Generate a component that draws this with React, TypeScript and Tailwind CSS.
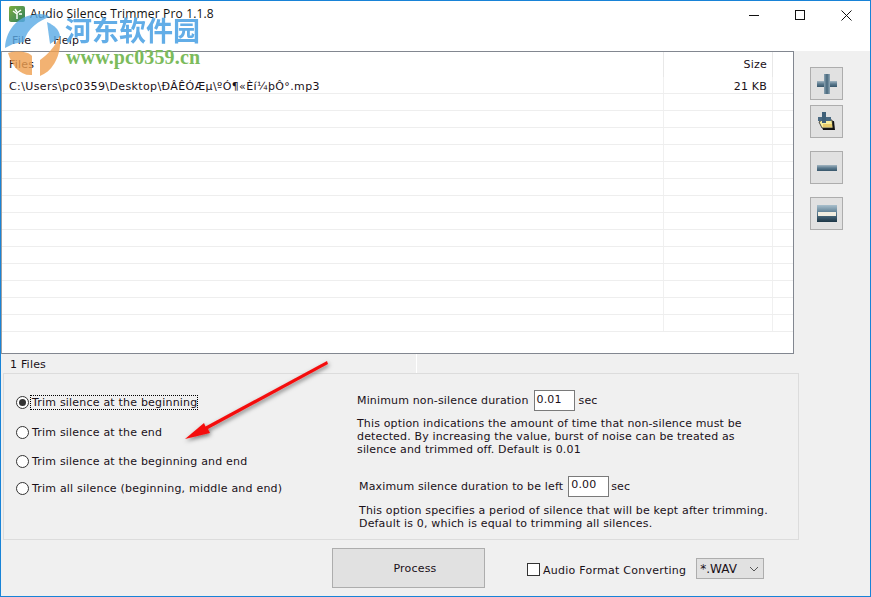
import React from "react";

const font = { fontFamily: '"DejaVu Sans", sans-serif' };

function PlusIcon() {
  return (
    <svg width="20" height="20" viewBox="0 0 20 20">
      <defs>
        <linearGradient id="pv" x1="0" y1="0" x2="1" y2="0">
          <stop offset="0" stopColor="#8ba3b2" />
          <stop offset="0.5" stopColor="#47677c" />
          <stop offset="1" stopColor="#93aab8" />
        </linearGradient>
        <linearGradient id="ph" x1="0" y1="0" x2="0" y2="1">
          <stop offset="0" stopColor="#a3b6c2" />
          <stop offset="0.5" stopColor="#5b7a8e" />
          <stop offset="1" stopColor="#37566b" />
        </linearGradient>
      </defs>
      <rect x="0" y="7" width="20" height="6" fill="url(#ph)" />
      <rect x="7" y="0" width="6" height="20" fill="url(#pv)" />
    </svg>
  );
}

function AddFolderIcon() {
  return (
    <svg width="20" height="20" viewBox="0 0 20 20">
      <path d="M4 10 L17 9 L18 18 L6 18 Z" fill="#111" />
      <path d="M2 10 L5 8 L15 8 L16 16 L5 16 Z" fill="#f7ef9e" stroke="#222" strokeWidth="0.8" />
      <rect x="6" y="12" width="9" height="3" fill="#e8cc6a" />
      <rect x="1" y="5" width="13" height="4" fill="#4a6a82" />
      <rect x="5" y="0" width="4" height="11" fill="#3f6078" />
    </svg>
  );
}

function MinusIcon() {
  return (
    <svg width="20" height="6" viewBox="0 0 20 6">
      <defs>
        <linearGradient id="mh" x1="0" y1="0" x2="0" y2="1">
          <stop offset="0" stopColor="#a3b6c2" />
          <stop offset="0.5" stopColor="#5b7a8e" />
          <stop offset="1" stopColor="#37566b" />
        </linearGradient>
      </defs>
      <rect width="20" height="6" fill="url(#mh)" />
    </svg>
  );
}

function ClearIcon() {
  return (
    <svg width="20" height="17" viewBox="0 0 20 17">
      <defs>
        <linearGradient id="cl" x1="0" y1="0" x2="0" y2="1">
          <stop offset="0" stopColor="#a9c0cd" />
          <stop offset="0.45" stopColor="#5c7d92" />
          <stop offset="1" stopColor="#1c3646" />
        </linearGradient>
      </defs>
      <rect width="20" height="17" fill="url(#cl)" />
      <rect x="1" y="7" width="18" height="4" fill="#f1ede0" />
    </svg>
  );
}

function ToolButton({ children, className = "" }: { children: React.ReactNode; className?: string }) {
  return (
    <div className={`w-[33px] h-[33px] bg-[#e1e1e1] border border-[#adadad] flex items-center justify-center ${className}`}>
      {children}
    </div>
  );
}

function Radio({ checked, label, focus, className = "" }: { checked?: boolean; label: string; focus?: boolean; className?: string }) {
  return (
    <div className={`flex items-center h-[13px] ${className}`}>
      <span className="w-[13px] h-[13px] rounded-full border border-[#333] bg-white flex items-center justify-center shrink-0">
        {checked && <span className="w-[7px] h-[7px] rounded-full bg-[#333]" />}
      </span>
      <span className={`ml-[2px] pl-[1px] leading-[13px] tracking-[0.2px] ${focus ? "outline-1 outline-dotted outline-black" : ""}`}>{label}</span>
    </div>
  );
}

const rows = Array.from({ length: 15 });

export default function App() {
  return (
    <div className="relative w-[871px] h-[597px] overflow-hidden bg-[#f0f0f0] border-x border-[#1883d7] border-y text-[11px] text-[#1a1018]" style={font}>
      {/* title + menu */}
      <div className="h-[50px] bg-white flex flex-col">
        <div className="h-[25px] flex items-center">
          <div className="ml-[8px] w-[16px] h-[16px] bg-gradient-to-br from-[#7cae3a] to-[#2c7f5c] rounded-[2px] flex items-center justify-center">
            <svg width="12" height="12" viewBox="0 0 12 12"><path d="M6 11 V5 M6 6 L2 3 M6 5 L10 2 M8 6 L11 6 M4 1 L6 4" stroke="#fff" strokeWidth="1.4" fill="none" /></svg>
          </div>
          <span className="ml-[5px] text-[12px] tracking-[0.16px] text-[#111] font-['Open_Sans',sans-serif]">Audio Silence Trimmer Pro 1.1.8</span>
          <div className="ml-auto flex items-center text-black pt-[3px]">
            <svg width="46" height="14" viewBox="0 0 46 14"><line x1="17" x2="27" y1="7.5" y2="7.5" stroke="#111" /></svg>
            <svg width="46" height="14" viewBox="0 0 46 14"><rect x="17.5" y="2.5" width="9" height="9" fill="none" stroke="#111" /></svg>
            <svg width="46" height="14" viewBox="0 0 46 14"><path d="M17.5 2.5 L27.5 12.5 M27.5 2.5 L17.5 12.5" stroke="#111" /></svg>
          </div>
        </div>
        <div className="flex h-[25px] items-center gap-[22px] pl-[11px] pt-[5px] text-[11px] tracking-[0.2px]">
          <span>File</span>
          <span>Help</span>
        </div>
      </div>

      {/* table + toolbar */}
      <div className="flex h-[303px]">
        <div className="w-[793px] h-full border-t border-r border-b border-[#828790] border-l border-l-[#a0a0a0] bg-white overflow-hidden">
          <div className="flex h-[25px] items-center">
            <div className="w-[661px] pl-[7px] pt-[2px] tracking-[0.2px]">Files</div>
            <div className="w-[110px] h-full border-x border-[#e8e8e8] flex items-center justify-end pr-[5px] pt-[2px] tracking-[0.2px]">Size</div>
          </div>
          {rows.map((_, i) => (
            <div key={i} className="flex h-[17px] border-b border-[#eeeeee]">
              <div className="w-[661px] pl-[7px] leading-[20px] whitespace-nowrap tracking-[0.38px]">
                {i === 0 ? "C:\\Users\\pc0359\\Desktop\\ÐÂÊÓÆµ\\ºÓ¶«Èí¼þÔ°.mp3" : ""}
              </div>
              <div className="w-[110px] border-x border-[#f0f0f0] text-right pr-[5px] leading-[20px] tracking-[0.2px]">{i === 0 ? "21 KB" : ""}</div>
            </div>
          ))}
        </div>
        <div className="ml-[16px] flex flex-col pt-[16px]">
          <ToolButton><PlusIcon /></ToolButton>
          <ToolButton className="mt-[5px]"><AddFolderIcon /></ToolButton>
          <ToolButton className="mt-[13px]"><MinusIcon /></ToolButton>
          <ToolButton className="mt-[13px]"><ClearIcon /></ToolButton>
        </div>
      </div>

      {/* status */}
      <div className="h-[19px] flex items-center pl-[9px]">
        <span className="w-[406px] pt-[4px] tracking-[0.2px]">1 Files</span>
        <span className="w-px h-full bg-white" />
      </div>

      {/* options */}
      <div className="ml-[2px] w-[796px] h-[167px] border border-[#dcdcdc] flex">
        <div className="w-[353px] pl-[12px] pt-[22px] flex flex-col">
          <Radio checked focus label="Trim silence at the beginning" />
          <Radio label="Trim silence at the end" className="mt-[17px]" />
          <Radio label="Trim silence at the beginning and end" className="mt-[16px]" />
          <Radio label="Trim all silence (beginning, middle and end)" className="mt-[14px]" />
        </div>
        <div className="flex-1 pt-[16px] tracking-[0.15px]">
          <div className="flex items-center h-[21px]">
            <span className="pt-[1px]">Minimum non-silence duration</span>
            <span className="ml-[5px] w-[41px] h-[21px] bg-white border border-[#7a7a7a] pl-[2px] leading-[18px]">0.01</span>
            <span className="ml-[4px] pt-[1px]">sec</span>
          </div>
          <div className="mt-[6px] leading-[13px] whitespace-nowrap">
            This option indications the amount of time that non-silence must be<br />
            detected. By increasing the value, burst of noise can be treated as<br />
            silence and trimmed off. Default is 0.01
          </div>
          <div className="ml-[2px] mt-[20px] flex items-center h-[21px]">
            <span className="pt-[2px]">Maximum silence duration to be left</span>
            <span className="ml-[5px] w-[41px] h-[21px] bg-white border border-[#7a7a7a] pl-[2px] leading-[16px]">0.00</span>
            <span className="ml-[2px] pt-[2px]">sec</span>
          </div>
          <div className="ml-[2px] mt-[7px] leading-[13px] whitespace-nowrap tracking-[0.17px]">
            This option specifies a period of silence that will be kept after trimming.<br />
            Default is 0, which is equal to trimming all silences.
          </div>
        </div>
      </div>

      {/* footer */}
      <div className="flex items-start pl-[331px] pt-[8px]">
        <div className="w-[153px] h-[40px] bg-[#e1e1e1] border border-[#adadad] flex items-center justify-center pl-[13px] pt-[3px] tracking-[0.2px]">Process</div>
        <div className="ml-[42px] mt-[15px] w-[13px] h-[13px] bg-white border border-[#333]" />
        <span className="ml-[3px] mt-[16px] leading-[13px] tracking-[0.25px]">Audio Format Converting</span>
        <div className="ml-[10px] mt-[10px] w-[68px] h-[21px] bg-[#e1e1e1] border border-[#adadad] flex items-center pl-[3px] justify-between pr-[4px] text-[12px]">
          <span>*.WAV</span>
          <svg width="10" height="6" viewBox="0 0 10 6"><path d="M1 1 L5 5 L9 1" fill="none" stroke="#555" /></svg>
        </div>
      </div>

      {/* overlays: watermark */}
      <div className="absolute -left-px -top-px w-[210px] h-[80px] pointer-events-none">
        <svg className="absolute left-0 top-0 opacity-80" width="64" height="80" viewBox="0 0 64 80">
          <path d="M5 48 C6 28 20 14 40 14 C44 14 47 15 50 17 C40 20 27 28 24 42 L13 44 Z" fill="#5aabe6" />
          <path d="M47 22 C54 25 60 30 60 37 L50 44 Z" fill="#5aabe6" />
          <path d="M8 53 C18 50 29 52 32 56 L32 75 C20 76 12 66 8 53 Z" fill="#f0a050" />
          <path d="M40 60 C48 54 54 48 60 36 C62 56 52 72 40 76 Z" fill="#f0a050" />
        </svg>
        <span className="absolute left-[65px] top-[13px] text-[27px] leading-[34px] font-bold text-[#5aa9e6] whitespace-nowrap opacity-95" style={{ fontFamily: '"Noto Sans CJK SC", sans-serif' }}>河东软件园</span>
        <span className="absolute left-[66px] top-[47px] text-[20px] leading-[20px] font-bold tracking-[0.15px] text-[#7cbb5c] whitespace-nowrap" style={{ fontFamily: '"Liberation Serif", serif' }}>www.pc0359.cn</span>
      </div>

      {/* overlay: annotation arrow */}
      <svg className="absolute -left-px -top-px pointer-events-none" width="871" height="597" viewBox="0 0 871 597">
        <defs>
          <filter id="as" x="-20%" y="-20%" width="140%" height="140%">
            <feDropShadow dx="1" dy="2" stdDeviation="2" floodColor="#000" floodOpacity="0.5" />
          </filter>
        </defs>
        <path d="M327 361 L328 364 L208 429 L210 433 L185 439 L204 423 L205.5 426.5 Z" fill="#f40e0e" filter="url(#as)" />
      </svg>
    </div>
  );
}
